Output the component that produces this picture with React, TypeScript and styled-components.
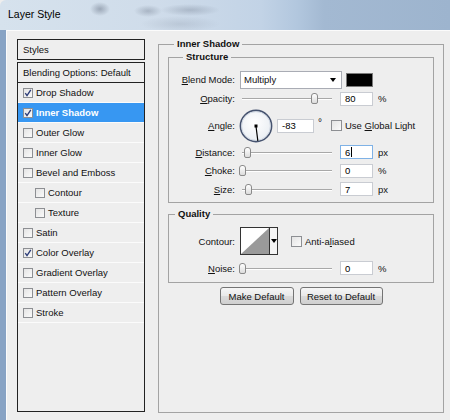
import styled, { createGlobalStyle } from 'styled-components'

const GlobalStyle = createGlobalStyle`
  html, body { margin: 0; padding: 0; background: #eeeeee; }
  * { box-sizing: border-box; }
`;

const Window = styled.div`
  width: 450px;
  height: 420px;
  overflow: hidden;
  display: flex;
  flex-direction: column;
  font-family: "Liberation Sans", Arial, sans-serif;
  font-size: 9.5px;
  color: #111;
  background: #eeeeee;
`;

const TitleBar = styled.div`
  height: 30px;
  flex: none;
  display: flex;
  align-items: center;
  padding: 0 0 2px 8px;
  border-top-left-radius: 6px;
  background:
    radial-gradient(ellipse 10px 7px at 100px 9px, rgba(55, 65, 85, 0.35), transparent),
    radial-gradient(ellipse 14px 6px at 148px 11px, rgba(55, 65, 85, 0.25), transparent),
    radial-gradient(ellipse 30px 6px at 190px 10px, rgba(55, 65, 85, 0.22), transparent),
    radial-gradient(ellipse 40px 8px at 180px 24px, rgba(55, 65, 85, 0.12), transparent),
    linear-gradient(90deg, #d6e2ed 0%, #cfdcea 35%, #c2d3e6 58%, #b2c7de 66%, #a3b9d2 72%, #9db4ce 100%);
`;

const Title = styled.span`
  font-size: 10.5px;
  color: #000;
`;

const Client = styled.div`
  flex: 1;
  display: flex;
  gap: 13px;
  padding: 8px 0 0 11px;
  border-left: 6px solid #88a3c4;
  box-shadow: inset 1px 1px 0 #fbfbfb;
`;

const LeftCol = styled.div`
  width: 128px;
  flex: none;
  display: flex;
  flex-direction: column;
  gap: 2px;
  margin-top: 1px;
`;

const StylesBox = styled.div`
  height: 21px;
  border: 1px solid #222;
  display: flex;
  align-items: center;
  padding-left: 5px;
`;

const StyleList = styled.div`
  height: 350px;
  border: 1px solid #222;
  display: flex;
  flex-direction: column;
`;

const ListHeader = styled.div`
  height: 20px;
  flex: none;
  border-bottom: 1px solid #222;
  display: flex;
  align-items: center;
  padding-left: 5px;
`;

const ListItem = styled.div<{ $active?: boolean; $indent?: boolean }>`
  height: 20px;
  flex: none;
  display: flex;
  align-items: center;
  gap: 3px;
  padding-left: ${p => (p.$indent ? 17 : 5)}px;
  border-bottom: 1px solid #fbfbfb;
  background: ${p => (p.$active ? '#3797f2' : 'transparent')};
  color: ${p => (p.$active ? '#fff' : '#111')};
  font-weight: ${p => (p.$active ? 'bold' : 'normal')};
`;

const Box = styled.span<{ $size?: number }>`
  width: ${p => p.$size ?? 10}px;
  height: ${p => p.$size ?? 10}px;
  flex: none;
  border: 1px solid #8d8f93;
  background: linear-gradient(135deg, #e4e4e4, #fafafa);
  display: flex;
  align-items: center;
  justify-content: center;
`;

const Check = ({ checked, size }: { checked?: boolean; size?: number }) => (
  <Box $size={size}>
    {checked && (
      <svg width="8" height="8" viewBox="0 0 8 8">
        <path d="M1.3 4.2 L3 6.6 L6.8 0.8" fill="none" stroke="#2c3c78" strokeWidth="1.4" />
      </svg>
    )}
  </Box>
);

const Group = styled.fieldset<{ $pad: string; $h?: number }>`
  margin: 0;
  min-width: 0;
  border: 1px solid #a3a3a3;
  padding: ${p => p.$pad};
  ${p => (p.$h ? `height: ${p.$h}px;` : '')}
  display: flex;
  flex-direction: column;
`;

const Legend = styled.legend<{ $indent: number }>`
  font-weight: bold;
  line-height: 12px;
  padding: 0 3px;
  margin-left: ${p => p.$indent}px;
  color: #111;
`;

const Outer = styled(Group)`
  width: 286px;
  flex: none;
`;

const Row = styled.div<{ $h: number }>`
  height: ${p => p.$h}px;
  flex: none;
  display: flex;
  align-items: center;
`;

const Label = styled.span`
  width: 66px;
  margin-right: 5px;
  text-align: right;
  flex: none;
  white-space: nowrap;
`;

const Select = styled.div`
  width: 102px;
  height: 18px;
  border: 1px solid #a9acb4;
  background: #fff;
  display: flex;
  align-items: center;
  justify-content: space-between;
  padding: 0 5px 0 3px;
  margin-right: 4px;
`;

const Arrow = styled.span`
  width: 0;
  height: 0;
  border-left: 3.5px solid transparent;
  border-right: 3.5px solid transparent;
  border-top: 4px solid #000;
`;

const Swatch = styled.div`
  width: 27px;
  height: 14px;
  background: #000;
  border: 1px solid #7a7a7a;
`;

const Slider = styled.div`
  width: 94px;
  height: 13px;
  margin-right: 6px;
  position: relative;
  flex: none;
  &::before {
    content: '';
    position: absolute;
    left: 2px;
    right: 2px;
    top: 6px;
    height: 1px;
    background: #a8a8a8;
    box-shadow: 0 1px 0 #fff;
  }
`;

const Thumb = styled.span`
  position: absolute;
  top: 1px;
  width: 7px;
  height: 11px;
  border: 1px solid #8a8a8a;
  border-radius: 3px 3px 2px 2px;
  background: linear-gradient(#ffffff, #dcdcdc);
`;

const Field = styled.div<{ $w?: number; $focus?: boolean }>`
  width: ${p => p.$w ?? 33}px;
  height: 14px;
  flex: none;
  background: #fff;
  border: 1px solid ${p => (p.$focus ? '#7fb2e6' : '#c9ccd2')};
  display: flex;
  align-items: center;
  padding-left: 4px;
  color: #000;
`;

const Caret = styled.span`
  width: 1px;
  height: 10px;
  background: #000;
  margin-left: 0.5px;
`;

const Unit = styled.span`
  margin-left: 5px;
`;

const Degree = styled.span`
  margin: 0 9px 6px 4px;
  font-size: 10px;
`;

const CheckLabel = styled.label`
  display: flex;
  align-items: center;
  gap: 3px;
`;

const Dial = styled.svg`
  flex: none;
  margin-left: -1px;
  margin-right: 4px;
`;

const ContourPicker = styled.div`
  width: 38px;
  height: 28px;
  border: 1px solid #333;
  display: flex;
  margin-right: 13px;
  background: #fff;
`;

const ContourDrop = styled.div`
  flex: 1;
  border-left: 1px solid #333;
  background: #f4f4f4;
  display: flex;
  align-items: center;
  justify-content: center;
`;

const Buttons = styled.div`
  display: flex;
  justify-content: center;
  gap: 6px;
  margin-top: 4px;
`;

const Button = styled.button<{ $w: number }>`
  width: ${p => p.$w}px;
  height: 18px;
  padding: 0;
  font: inherit;
  color: #111;
  border: 1px solid #747474;
  border-radius: 3px;
  background: linear-gradient(#f6f6f6 0%, #e9e9e9 50%, #dbdbdb 51%, #cfcfcf 100%);
`;

const listItems = [
  { label: 'Drop Shadow', checked: true },
  { label: 'Inner Shadow', checked: true, active: true },
  { label: 'Outer Glow' },
  { label: 'Inner Glow' },
  { label: 'Bevel and Emboss' },
  { label: 'Contour', indent: true },
  { label: 'Texture', indent: true },
  { label: 'Satin' },
  { label: 'Color Overlay', checked: true },
  { label: 'Gradient Overlay' },
  { label: 'Pattern Overlay' },
  { label: 'Stroke' },
];

const SliderBar = ({ value }: { value: number }) => (
  <Slider>
    <Thumb style={{ left: 2 + (value / 100) * 90 - 3.5 }} />
  </Slider>
);

const SliderRow = (props: { h: number; u: string; rest: string; value: number; text: string; unit: string; focus?: boolean }) => (
  <Row $h={props.h}>
    <Label><u>{props.u}</u>{props.rest}</Label>
    <SliderBar value={props.value} />
    <Field $focus={props.focus}>
      {props.text}
      {props.focus && <Caret />}
    </Field>
    <Unit>{props.unit}</Unit>
  </Row>
);

const App = () => {
  const rad = (83 * Math.PI) / 180;
  return (
    <Window>
      <GlobalStyle />
      <TitleBar>
        <Title>Layer Style</Title>
      </TitleBar>
      <Client>
        <LeftCol>
          <StylesBox>Styles</StylesBox>
          <StyleList>
            <ListHeader>Blending Options: Default</ListHeader>
            {listItems.map((item, i) => (
              <ListItem key={i} $active={item.active} $indent={item.indent}>
                <Check checked={item.checked} />
                {item.label}
              </ListItem>
            ))}
          </StyleList>
        </LeftCol>

        <Outer $pad="1px 9px 0 9px" $h={375}>
          <Legend $indent={6}>Inner Shadow</Legend>
          <Group $pad="7px 0 4px 0">
            <Legend $indent={14}>Structure</Legend>
            <Row $h={19}>
              <Label><u>B</u>lend Mode:</Label>
              <Select>
                Multiply
                <Arrow />
              </Select>
              <Swatch />
            </Row>
            <Row $h={19}>
              <Label><u>O</u>pacity:</Label>
              <SliderBar value={80} />
              <Field>80</Field>
              <Unit>%</Unit>
            </Row>
            <Row $h={35}>
              <Label><u>A</u>ngle:</Label>
              <Dial width="34" height="34" viewBox="0 0 34 34">
                <defs>
                  <radialGradient id="dialFill" cx="0.45" cy="0.4" r="0.7">
                    <stop offset="0" stopColor="#ffffff" />
                    <stop offset="1" stopColor="#e6ebf1" />
                  </radialGradient>
                </defs>
                <circle cx="17" cy="17" r="15.6" fill="url(#dialFill)" stroke="#46536f" strokeWidth="1.6" />
                <circle cx="17" cy="17" r="14.4" fill="none" stroke="#c9d2de" strokeWidth="0.8" />
                <line x1="17" y1="17" x2={17 + 15 * Math.cos(rad)} y2={17 + 15 * Math.sin(rad)} stroke="#000" strokeWidth="1.2" />
                <rect x="15.5" y="15.5" width="3" height="3" fill="#000" />
              </Dial>
              <Field $w={37}>-83</Field>
              <Degree>°</Degree>
              <CheckLabel>
                <Check size={11} />
                <span>Use <u>G</u>lobal Light</span>
              </CheckLabel>
            </Row>
            <SliderRow h={18} u="D" rest="istance:" value={6} text="6" unit="px" focus />
            <SliderRow h={19} u="C" rest="hoke:" value={1} text="0" unit="%" />
            <SliderRow h={18} u="S" rest="ize:" value={7} text="7" unit="px" />
          </Group>

          <Group $pad="6px 0 2px 0" style={{ marginTop: 5 }}>
            <Legend $indent={6}>Quality</Legend>
            <Row $h={30}>
              <Label>Contour:</Label>
              <ContourPicker>
                <svg width="28" height="26" viewBox="0 0 28 26">
                  <rect width="28" height="26" fill="#fff" />
                  <polygon points="0,26 28,0 28,26" fill="#9a9a9a" />
                </svg>
                <ContourDrop>
                  <Arrow />
                </ContourDrop>
              </ContourPicker>
              <CheckLabel>
                <Check size={11} />
                <span>Anti-a<u>l</u>iased</span>
              </CheckLabel>
            </Row>
            <SliderRow h={24} u="N" rest="oise:" value={0} text="0" unit="%" />
          </Group>

          <Buttons>
            <Button $w={74}>Make Default</Button>
            <Button $w={83}>Reset to Default</Button>
          </Buttons>
        </Outer>
      </Client>
    </Window>
  );
};

export default App;
